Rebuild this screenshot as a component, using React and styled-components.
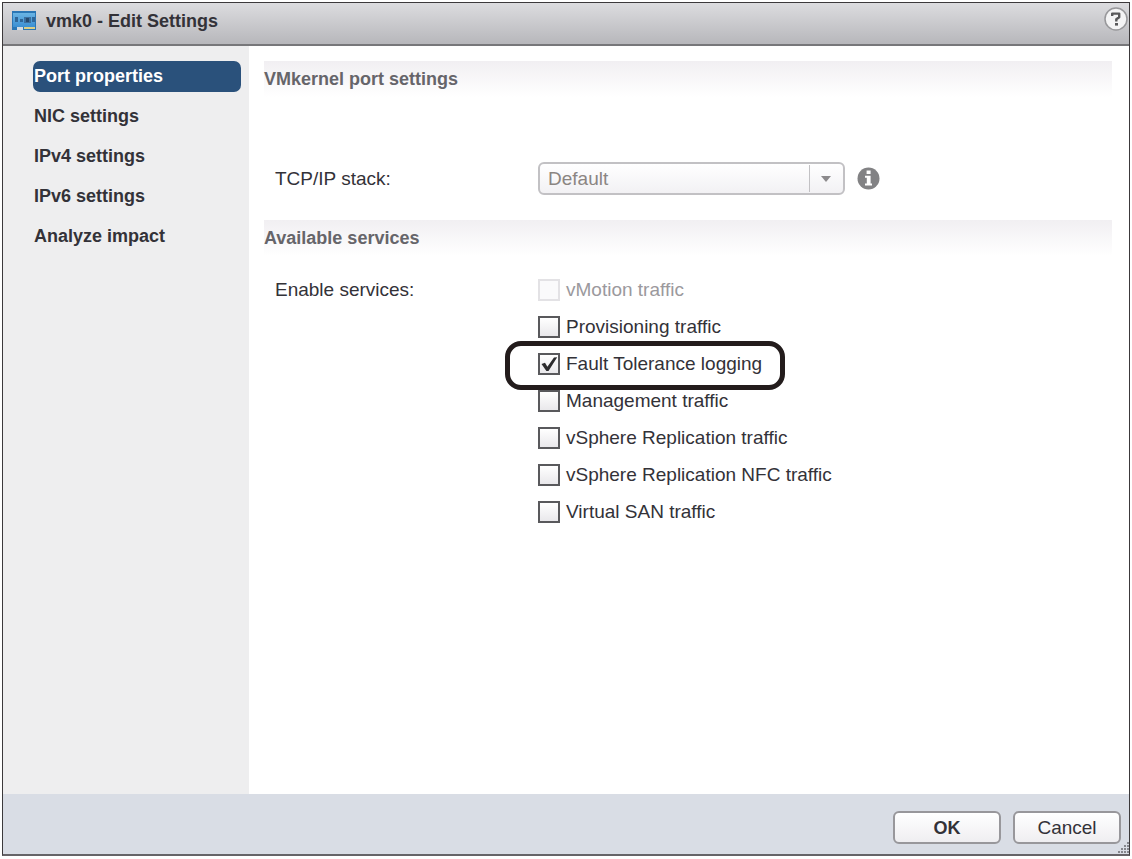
import React, { useState } from 'react';
import styled, { createGlobalStyle } from 'styled-components';

const pages = [
  'Port properties',
  'NIC settings',
  'IPv4 settings',
  'IPv6 settings',
  'Analyze impact',
];

const services = [
  { id: 'vmotion', label: 'vMotion traffic', disabled: true },
  { id: 'provisioning', label: 'Provisioning traffic' },
  { id: 'fault-tolerance', label: 'Fault Tolerance logging', checked: true, marked: true },
  { id: 'management', label: 'Management traffic' },
  { id: 'replication', label: 'vSphere Replication traffic' },
  { id: 'replication-nfc', label: 'vSphere Replication NFC traffic' },
  { id: 'vsan', label: 'Virtual SAN traffic' },
];

const AdapterIcon = () => (
  <svg width="25" height="20" viewBox="0 0 25 20" aria-hidden="true">
    <defs>
      <linearGradient id="board" x1="0" y1="0" x2="0" y2="1">
        <stop offset="0" stopColor="#6ab4e4" />
        <stop offset="1" stopColor="#3b8fd2" />
      </linearGradient>
    </defs>
    <path d="M0 0h24v19H11v-3H5v3H0z" fill="#2a76b5" />
    <path d="M1 2h22v14H1z" fill="url(#board)" />
    <path d="M5 16h6v3H5z" fill="#d3dbe3" />
    <path d="M12 16h11v2H12z" fill="#dccf86" />
    <path d="M3 6h3v5H3zM8 8h3v3H8zM20 6h3v5h-3z" fill="#2f6699" />
    <path d="M12 6h7v6h-7z" fill="#3b6f9f" />
    <path d="M14 7h3v4h-3z" fill="#264a70" />
  </svg>
);

const HelpIcon = () => (
  <svg width="24" height="24" viewBox="0 0 24 24" aria-hidden="true">
    <circle cx="12" cy="12" r="11" fill="#f4f4f5" stroke="#98989b" strokeWidth="1.500" />
    <path d="M8.200 9V6.600h7V10.200L12.300 12.200V14.400" fill="none" stroke="#58585a" strokeWidth="2.400" strokeLinejoin="round" />
    <path d="M11 16h3v2.600h-3z" fill="#58585a" />
  </svg>
);

const InfoIcon = () => (
  <svg width="23" height="23" viewBox="0 0 23 23" role="img" aria-label="Information">
    <circle cx="11.500" cy="11.500" r="11" fill="#828284" />
    <path d="M9.600 3.600h4v3.400h-4zM8 8.800h5.600v7.600H15v2H8v-2h1.800v-5.600H8z" fill="#fff" />
  </svg>
);

const App = () => {
  const [page, setPage] = useState(pages[0]);
  return (
    <>
      <GlobalStyle />
      <Dialog role="dialog" aria-labelledby="dialog-title">
        <TitleBar>
          <AdapterIcon />
          <Title id="dialog-title">vmk0 - Edit Settings</Title>
          <HelpButton type="button" aria-label="Help"><HelpIcon /></HelpButton>
        </TitleBar>
        <Body>
          <Sidebar>
            {pages.map((name) => (
              <NavItem key={name} type="button" $active={name === page} onClick={() => setPage(name)}>
                {name}
              </NavItem>
            ))}
          </Sidebar>
          <Content>
            <SectionTitle>VMkernel port settings</SectionTitle>
            <StackRow>
              <label htmlFor="stack">TCP/IP stack:</label>
              <StackControl>
                <SelectBox>
                  <Select id="stack" disabled defaultValue="Default">
                    <option>Default</option>
                  </Select>
                  <SelectArrow>
                    <svg width="10" height="6" viewBox="0 0 10 6" aria-hidden="true">
                      <path d="M0 0h10L5 6z" fill="#8c8a8c" />
                    </svg>
                  </SelectArrow>
                </SelectBox>
                <InfoIcon />
              </StackControl>
            </StackRow>
            <SectionTitle>Available services</SectionTitle>
            <ServicesRow role="group" aria-labelledby="services-label">
              <ServicesLabel id="services-label">Enable services:</ServicesLabel>
              <ServiceList>
                {services.map((service) => (
                  <Service key={service.id} $disabled={service.disabled} $marked={service.marked}>
                    <CheckCell>
                      <Checkbox
                        type="checkbox"
                        id={service.id}
                        disabled={service.disabled}
                        defaultChecked={service.checked}
                      />
                      <Tick viewBox="0 0 22 22" aria-hidden="true">
                        <path d="M3.500 11l3.500-1.200 2.400 4L16 4.500 19.200 4.200 10.500 18H8.400z" fill="#2b2b2d" />
                      </Tick>
                    </CheckCell>
                    <label htmlFor={service.id}>{service.label}</label>
                  </Service>
                ))}
              </ServiceList>
            </ServicesRow>
          </Content>
        </Body>
        <Footer>
          <Button type="button" $primary>OK</Button>
          <Button type="button">Cancel</Button>
          <Grip width="12" height="12" viewBox="0 0 12 12" aria-hidden="true">
            <path
              d="M10 0h2v2h-2zM7 3h2v2H7zM10 3h2v2h-2zM4 6h2v2H4zM7 6h2v2H7zM10 6h2v2h-2zM1 9h2v2H1zM4 9h2v2H4zM7 9h2v2H7zM10 9h2v2h-2z"
              fill="#85878d"
            />
          </Grip>
        </Footer>
      </Dialog>
    </>
  );
};

const GlobalStyle = createGlobalStyle`
  * {
    box-sizing: border-box;
  }

  body {
    margin: 0;
    background: #fff;
    color: #333238;
    font-family: "Liberation Sans", Arial, sans-serif;
    font-size: 19px;
    line-height: 24px;
  }

  button, select {
    font: inherit;
    color: inherit;
  }
`

const Dialog = styled.div`
  display: flex;
  flex-direction: column;
  min-height: calc(100vh - 5px);
  margin: 2px 2px 3px;
  border: 1px solid #3c393b;
  border-bottom: 2px solid #666468;
`

const TitleBar = styled.header`
  display: flex;
  align-items: center;
  gap: 9px;
  height: 43px;
  padding: 0 1px 6px 9px;
  border-bottom: 2px solid #77777a;
  background: linear-gradient(#dcdcdf, #b7b7bb);
`

const Title = styled.h1`
  flex: 1;
  margin: 0;
  font-size: 18px;
  line-height: 24px;
`

const HelpButton = styled.button`
  display: flex;
  align-self: flex-start;
  margin-top: 4px;
  padding: 0;
  border: 0;
  background: none;
`

const Body = styled.div`
  display: flex;
  flex: 1;
`

const Sidebar = styled.nav`
  display: flex;
  flex-direction: column;
  gap: 9px;
  width: 246px;
  padding: 15px 8px 15px 30px;
  background: #eeeeef;
`

const NavItem = styled.button`
  height: 31px;
  padding: 0 1px 2px;
  border: 0;
  border-radius: 7px;
  background: ${({ $active }) => ($active ? '#2a517b' : 'none')};
  color: ${({ $active }) => ($active ? '#fff' : '#333238')};
  font-size: 18px;
  font-weight: bold;
  text-align: left;
`

const Content = styled.main`
  flex: 1;
  padding: 15px 17px 15px 15px;
`

const SectionTitle = styled.h2`
  margin: 0;
  height: 36px;
  background: linear-gradient(#f1eff2, #fff);
  color: #66656a;
  font-size: 18px;
  line-height: 36px;
`

const Row = styled.div`
  display: grid;
  grid-template-columns: 263px 1fr;
  padding-left: 11px;
`

const StackRow = styled(Row)`
  align-items: center;
  margin: 65px 0 25px;
`

const StackControl = styled.div`
  display: flex;
  align-items: center;
  gap: 12px;
`

const SelectBox = styled.div`
  display: grid;
  width: 307px;
`

const Select = styled.select`
  grid-area: 1 / 1;
  height: 33px;
  padding: 0 45px 0 8px;
  border: 2px solid #c2c1c4;
  border-radius: 6px;
  appearance: none;
  background: linear-gradient(#fff, #f2f1f4);
  color: #8b8582;
  opacity: 1;
`

const SelectArrow = styled.span`
  grid-area: 1 / 1;
  display: flex;
  align-items: center;
  justify-content: center;
  justify-self: end;
  width: 36px;
  margin: 3px 0;
  padding-right: 4px;
  border-left: 1px solid #c2c1c4;
  pointer-events: none;
`

const ServicesRow = styled(Row)`
  margin-top: 15px;
`

const ServicesLabel = styled.span`
  line-height: 37px;
`

const ServiceList = styled.div`
  justify-self: start;
`

const Service = styled.div`
  position: relative;
  display: flex;
  align-items: center;
  gap: 6px;
  height: 37px;
  width: max-content;
  color: ${({ $disabled }) => ($disabled ? '#9b999d' : 'inherit')};

  &::after {
    content: "";
    display: ${({ $marked }) => ($marked ? 'block' : 'none')};
    position: absolute;
    inset: -4px -23px -8px -33px;
    border: 5px solid #231c1c;
    border-radius: 16px;
    pointer-events: none;
  }
`

const CheckCell = styled.span`
  display: grid;
`

const Tick = styled.svg`
  grid-area: 1 / 1;
  width: 22px;
  height: 22px;
  visibility: hidden;
  pointer-events: none;
`

const Checkbox = styled.input`
  grid-area: 1 / 1;
  width: 22px;
  height: 22px;
  margin: 0;
  border: 2px solid #59595c;
  appearance: none;
  background: linear-gradient(#fff, #e9e8eb);

  &:checked + ${Tick} {
    visibility: visible;
  }

  &:disabled {
    border-color: #e3e2e5;
    background: #fafafb;
  }
`

const Footer = styled.footer`
  position: relative;
  display: flex;
  justify-content: flex-end;
  gap: 12px;
  padding: 17px 8px 10px;
  background: #d9dde5;
`

const Button = styled.button`
  width: 108px;
  height: 33px;
  padding: 0;
  border: 2px solid #98979b;
  border-radius: 6px;
  background: linear-gradient(#fff, #efeef1);
  font-size: ${({ $primary }) => ($primary ? '18px' : '19px')};
  font-weight: ${({ $primary }) => ($primary ? 'bold' : 'normal')};
`

const Grip = styled.svg`
  position: absolute;
  right: 0;
  bottom: 0;
`

export default App;
